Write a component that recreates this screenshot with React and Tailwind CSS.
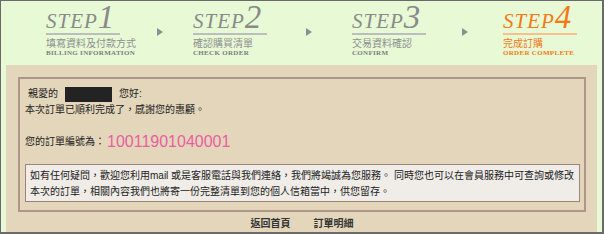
import React from "react";

const steps = [
  { no: "1", zh: "填寫資料及付款方式", en: "BILLING INFORMATION", ml: "ml-[45px]" },
  { no: "2", zh: "確認購買清單", en: "CHECK ORDER", ml: "ml-[30px]" },
  { no: "3", zh: "交易資料確認", en: "CONFIRM", ml: "ml-[40px]" },
  { no: "4", zh: "完成訂購", en: "ORDER COMPLETE", ml: "ml-[35px]", active: true },
];

const arrowGaps = ["ml-[37px]", "ml-[39px]", "ml-[36px]"];

const Arrow = ({ ml }) => (
  <svg className={`${ml} mt-[27px] shrink-0`} width="6" height="8" viewBox="0 0 6 8">
    <polygon points="0,0 6,4 0,8" fill="#8f8f8f" />
  </svg>
);

const Step = ({ step }) => {
  const color = step.active ? "text-[#f27a14]" : "text-[#8a8a8a]";
  return (
    <div className={`${step.ml} w-[74px] shrink-0 flex flex-col whitespace-nowrap`}>
      <div className={`h-[32px] leading-none italic ${color}`} style={{ fontFamily: '"Liberation Serif", serif' }}>
        <span className="text-[21px] tracking-[1px]">STEP</span>
        <span className="text-[33px]">{step.no}</span>
      </div>
      <div className={`h-[2px] ${step.active ? "bg-[#f7c08c]" : "bg-[#bdbdbd]"}`} />
      <div className={`mt-[4px] text-[10px] leading-[10px] ${step.active ? "text-[#f27a14]" : "text-[#909090]"}`}>{step.zh}</div>
      <div
        className={`text-[7px] leading-[8px] tracking-[0.3px] font-bold ${step.active ? "text-[#f27a14]" : "text-[#7d7d7d]"}`}
        style={{ fontFamily: '"Liberation Serif", serif' }}
      >
        {step.en}
      </div>
    </div>
  );
};

export default function App() {
  return (
    <div
      className="w-[604px] h-[234px] flex flex-col bg-[#e8f9d6] border-l border-t border-r-2 border-b-2 border-[#6a6a6a] text-[#222]"
      style={{ fontFamily: '"Liberation Sans", "Noto Sans CJK TC", sans-serif' }}
    >
      {/* steps */}
      <div className="h-[64px] flex items-start shrink-0">
        {steps.map((s, i) => (
          <React.Fragment key={s.no}>
            <Step step={s} />
            {i < 3 && <Arrow ml={arrowGaps[i]} />}
          </React.Fragment>
        ))}
      </div>

      {/* panel */}
      <div className="flex-1 mx-[5px] bg-[#e3d6bb] pt-[12px] pl-[12px] pr-[11px]">
        <div className="border-2 border-[#b0958a] pl-[5px] pr-[4px] pt-[7px] pb-[8px] text-[10px] leading-[16px]">
          <div className="pl-[3px] flex items-center">
            <span>親愛的</span>
            <span className="inline-block w-[47px] h-[15px] bg-[#232323] mx-[7px]" />
            <span>您好:</span>
          </div>
          <div>本次訂單已順利完成了，感謝您的惠顧。</div>
          <div className="h-[16px]" />
          <div className="flex items-center">
            <span>您的訂單編號為：</span>
            <span className="ml-[2px] text-[16px] leading-[16px] text-[#ea5f9f]">10011901040001</span>
          </div>
          <div className="mt-[14px] border border-[#9f837b] bg-[#f0ece7] pl-[4px] pt-[3px] pb-[1px] leading-[16px] whitespace-nowrap">
            如有任何疑問，歡迎您利用mail 或是客服電話與我們連絡，我們將竭誠為您服務。 同時您也可以在會員服務中可查詢或修改
            <br />
            本次的訂單，相關內容我們也將寄一份完整清單到您的個人信箱當中，供您留存。
          </div>
        </div>
        <div className="mt-[4px] flex justify-center gap-[23px] text-[10px] leading-[16px] font-bold text-[#333]">
          <span>返回首頁</span>
          <span>訂單明細</span>
        </div>
      </div>
    </div>
  );
}
